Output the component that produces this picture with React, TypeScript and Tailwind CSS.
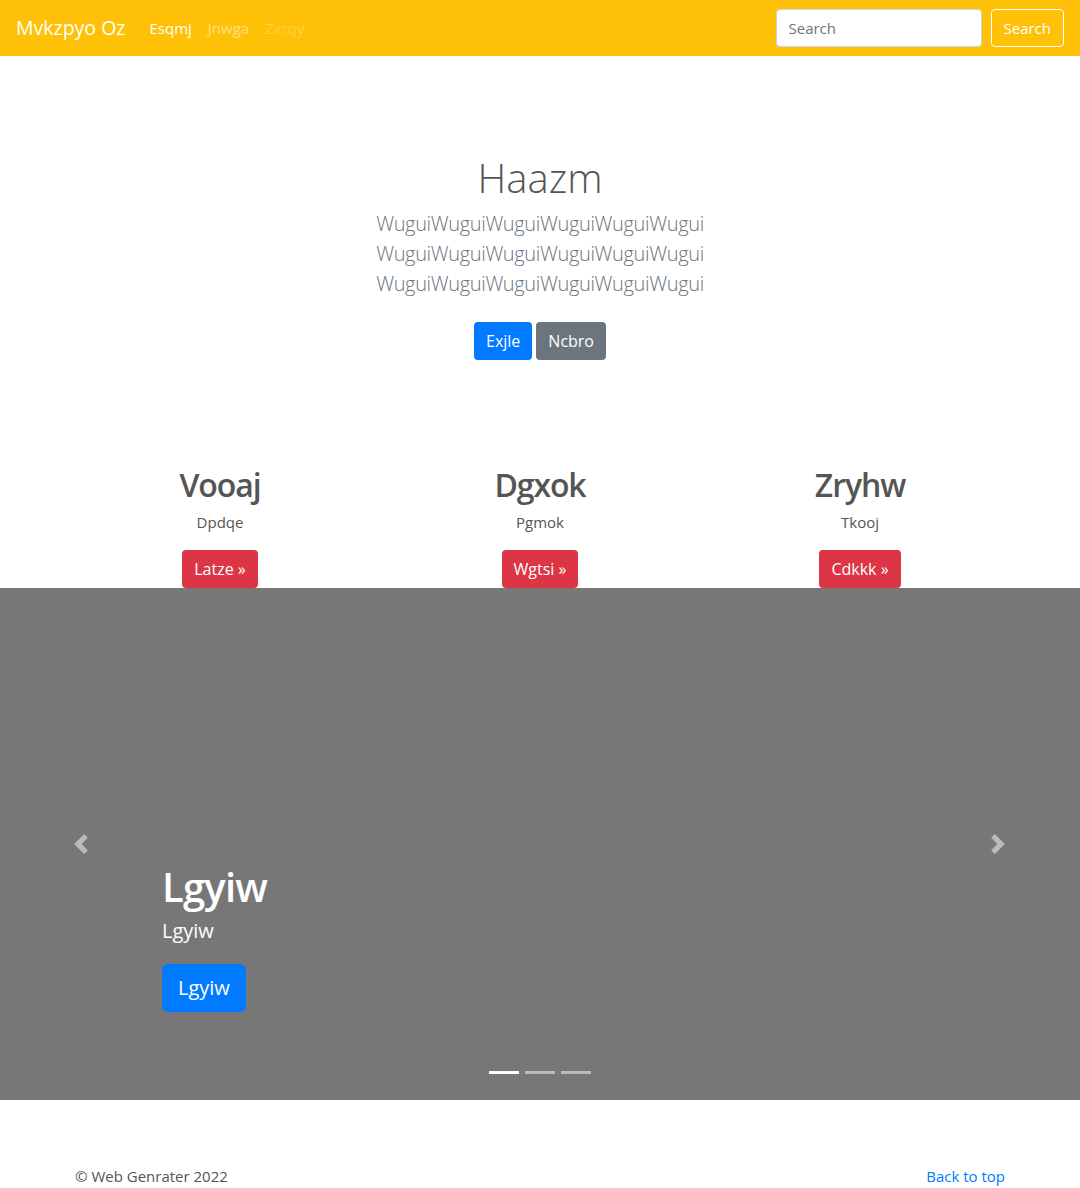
import React from "react";

const font = { fontFamily: '"Open Sans", "Noto Sans", sans-serif' };

const Navbar = () => {
  return (
    <nav className="h-[56px] bg-[#ffc107] flex items-center justify-between px-4">
      <div className="flex items-center">
        <a className="text-[19.5px] text-white mr-4 leading-[30px]">Mvkzpyo Oz</a>
        <div className="flex items-center text-[15px]">
          <a className="px-2 text-white">Esqmj</a>
          <a className="px-2 text-white/50">Jnwga</a>
          <a className="px-2 text-white/25">Zxrqy</a>
        </div>
      </div>
      <div className="flex items-center gap-[9px]">
        <input
          placeholder="Search"
          className="w-[206px] h-[38px] rounded border border-[#ced4da] bg-white px-3 text-[15px] text-[#495057] placeholder:text-[#6c757d] outline-none"
        />
        <button className="h-[38px] px-3 rounded border border-white text-white text-[15px]">
          Search
        </button>
      </div>
    </nav>
  );
};

const Hero = () => {
  return (
    <section className="pt-[98px] pb-[106px] text-center">
      <h1 className="text-[40px] font-light leading-[48px] text-[#555] mb-[7px]">Haazm</h1>
      <p className="text-[20px] font-light leading-[30px] tracking-[-0.35px] text-[#6c757d] w-[340px] mx-auto break-all">
        WuguiWuguiWuguiWuguiWuguiWugui
        <br />
        WuguiWuguiWuguiWuguiWuguiWugui
        <br />
        WuguiWuguiWuguiWuguiWuguiWugui
      </p>
      <div className="mt-[23px] flex justify-center gap-1">
        <button className="h-[38px] px-3 rounded bg-[#007bff] text-white text-[16px]">Exjle</button>
        <button className="h-[38px] px-3 rounded bg-[#6c757d] text-white text-[16px]">Ncbro</button>
      </div>
    </section>
  );
};

const cols = [
  { title: "Vooaj", text: "Dpdqe", btn: "Latze" },
  { title: "Dgxok", text: "Pgmok", btn: "Wgtsi" },
  { title: "Zryhw", text: "Tkooj", btn: "Cdkkk" },
];

const Columns = () => {
  return (
    <div className="max-w-[960px] mx-auto grid grid-cols-3">
      {cols.map((c) => (
        <div key={c.title} className="px-[15px] text-center flex flex-col items-center">
          <h2 className="text-[32px] font-semibold tracking-[-1.1px] leading-[38px] text-[#555] mb-[6px]">
            {c.title}
          </h2>
          <p className="text-[15px] leading-[24px] text-[#555] mb-4">{c.text}</p>
          <button className="h-[38px] px-3 rounded bg-[#dc3545] text-white text-[16px]">
            {c.btn} »
          </button>
        </div>
      ))}
    </div>
  );
};

const Carousel = () => {
  return (
    <div className="relative h-[512px] bg-[#777] flex flex-col justify-end pl-[162px] pb-[88px]">
      <h1 className="text-[40px] font-semibold tracking-[-0.8px] leading-[48px] text-white mb-[5px]">Lgyiw</h1>
      <p className="text-[20px] leading-[30px] text-white mb-[18px]">Lgyiw</p>
      <div>
        <button className="h-[48px] px-4 rounded-md bg-[#007bff] text-white text-[20px]">Lgyiw</button>
      </div>
      <svg className="absolute left-[71px] top-[246px] w-5 h-5" viewBox="0 0 8 8" fill="#fff" opacity={0.5}>
        <path d="M5.25 0l-4 4 4 4 1.5-1.5L4.25 4l2.5-2.5L5.25 0z" />
      </svg>
      <svg className="absolute right-[72px] top-[246px] w-5 h-5" viewBox="0 0 8 8" fill="#fff" opacity={0.5}>
        <path d="M2.75 0l-1.5 1.5L3.75 4l-2.5 2.5L2.75 8l4-4-4-4z" />
      </svg>
      <div className="absolute bottom-[26px] left-0 right-0 flex justify-center gap-[6px]">
        <span className="w-[30px] h-[3px] bg-white" />
        <span className="w-[30px] h-[3px] bg-white/50" />
        <span className="w-[30px] h-[3px] bg-white/50" />
      </div>
    </div>
  );
};

const Footer = () => {
  return (
    <footer className="max-w-[960px] mx-auto px-[15px] pt-[64px] pb-12 flex justify-between text-[15px] leading-[24px]">
      <p className="text-[#555]">© Web Genrater 2022</p>
      <a className="text-[#007bff]">Back to top</a>
    </footer>
  );
};

export default function App() {
  return (
    <div style={font} className="bg-white min-h-[1188px]">
      <Navbar />
      <Hero />
      <Columns />
      <Carousel />
      <Footer />
    </div>
  );
}
